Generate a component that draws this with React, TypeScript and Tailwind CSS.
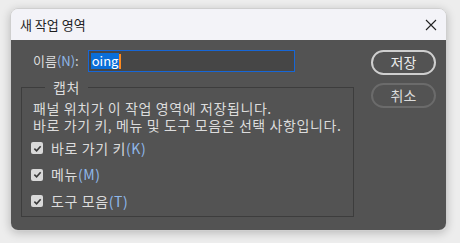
import React from "react";

const font = { fontFamily: '"Noto Sans CJK KR", "Noto Sans", sans-serif' };

const Check = ({ label, hot }: { label: string; hot: string }) => (
    <label className="flex items-center gap-[8px] h-[26.5px]">
        <span className="w-[12px] h-[12px] rounded-[2px] bg-[#d9d9d9] flex items-center justify-center">
            <svg width="9" height="9" viewBox="0 0 10 10">
                <path d="M1.5 5.2 L4 7.6 L8.5 2.4" fill="none" stroke="#3a3a3a" strokeWidth="1.8" />
            </svg>
        </span>
        <span className="text-[14px] tracking-[0.6px] text-[#dcdcdc]">
            {label}
            <span className="text-[#8fb8ea]">({hot})</span>
        </span>
    </label>
);

export default function App() {
    return (
        <div className="w-[460px] h-[243px] bg-[#ededed] pt-[8px] pl-[10px]" style={font}>
            <div className="w-[437px] h-[223px] rounded-[8px] overflow-hidden flex flex-col border border-[#cfcfcf] shadow-[0_2px_10px_rgba(0,0,0,0.22)]">
                <div className="h-[31px] bg-[#f3f3f8] flex items-center justify-between pl-[9px] pr-[9px] shrink-0">
                    <span className="text-[13px] text-[#1e1e1e]">새 작업 영역</span>
                    <svg width="12" height="12" viewBox="0 0 12 12">
                        <path d="M1 1 L11 11 M11 1 L1 11" stroke="#222" strokeWidth="1.1" />
                    </svg>
                </div>
                <div className="flex-1 bg-[#535353] flex pl-[10px] pt-[10px]">
                    <div className="w-[333px] flex flex-col">
                        <div className="flex items-center h-[22px] pl-[12px] gap-[9px]">
                            <span className="text-[13px] text-[#dcdcdc]">
                                이름<span className="text-[#8fb8ea]">(N)</span>:
                            </span>
                            <div className="w-[207px] h-[22px] bg-[#464646] border border-[#1666d6] flex items-center pl-[2px]">
                                <span className="bg-[#0a6ed8] text-white text-[13px] leading-[16px] px-[1px]">oing</span>
                                <span className="w-[2px] h-[15px] bg-[#ff8a1e]" />
                            </div>
                        </div>
                        <fieldset className="mt-[6px] h-[139px] border border-[#3d3d3d] pl-[11px] pt-0">
                            <legend className="ml-[12px] px-[8px] text-[14px] leading-[18px] tracking-[0.6px] text-[#dcdcdc]">캡처</legend>
                            <div className="text-[14px] leading-[17px] tracking-[0.6px] text-[#dcdcdc] mt-[4px]">
                                <div>패널 위치가 이 작업 영역에 저장됩니다.</div>
                                <div>바로 가기 키, 메뉴 및 도구 모음은 선택 사항입니다.</div>
                            </div>
                            <div className="flex flex-col mt-[1px] -ml-[2px]">
                                <Check label="바로 가기 키" hot="K" />
                                <Check label="메뉴" hot="M" />
                                <Check label="도구 모음" hot="T" />
                            </div>
                        </fieldset>
                    </div>
                    <div className="flex flex-col ml-[17px] gap-[8px]">
                        <button className="w-[65px] h-[25px] rounded-full border-2 border-[#cfcfcf] text-[14px] text-[#ececec]">
                            저장
                        </button>
                        <button className="w-[65px] h-[25px] rounded-full border-2 border-[#6b6b6b] text-[14px] text-[#dcdcdc]">
                            취소
                        </button>
                    </div>
                </div>
            </div>
        </div>
    );
}
